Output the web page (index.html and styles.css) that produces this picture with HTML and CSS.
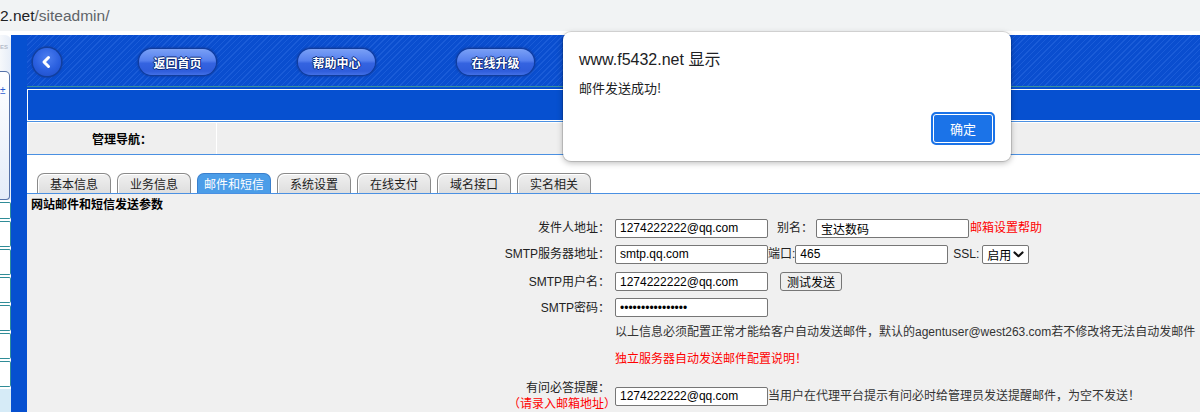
FILE: index.html
```html
<!DOCTYPE html>
<html lang="zh-CN">
<head>
<meta charset="utf-8">
<title>siteadmin</title>
<link rel="stylesheet" href="styles.css">
</head>
<body>
<div class="urlbar"><span class="host">2.net</span><span class="path">/siteadmin/</span></div>
<div class="page">
  <aside class="side">
    <div class="side-top">
      <div class="side-head">ES</div>
      <div class="side-panel"><span class="side-link">±</span></div>
    </div>
    <div class="side-list">
      <div class="side-item short"></div>
      <div class="side-item"></div>
      <div class="side-item"></div>
      <div class="side-item"></div>
      <div class="side-item"></div>
      <div class="side-item"></div>
      <div class="side-item"></div>
    </div>
    <div class="side-foot"></div>
  </aside>
  <div class="strip"></div>
  <main class="main">
    <div class="masthead">
      <header class="top">
        <a class="back" href="#"><svg width="28" height="28" viewBox="0 0 28 28"><polyline points="15.5,9.5 11,14 15.5,18.5" fill="none" stroke="#fff" stroke-width="3" stroke-linecap="round" stroke-linejoin="round"/></svg></a>
        <a class="pill first" href="#">返回首页</a>
        <a class="pill" href="#">帮助中心</a>
        <a class="pill" href="#">在线升级</a>
      </header>
      <div class="band"></div>
    </div>
    <div class="navrow">
      <div class="navlabel">管理导航：</div>
      <div class="navfill"></div>
    </div>
    <nav class="tabs">
      <span class="tab">基本信息</span>
      <span class="tab">业务信息</span>
      <span class="tab active">邮件和短信</span>
      <span class="tab">系统设置</span>
      <span class="tab">在线支付</span>
      <span class="tab">域名接口</span>
      <span class="tab">实名相关</span>
    </nav>
    <section class="panel">
      <div class="panel-title">网站邮件和短信发送参数</div>
      <div class="row r-sender">
        <div class="label">发件人地址：</div>
        <div class="field">
          <input class="input" type="text" value="1274222222@qq.com">
          <span class="alias-label">别名：</span>
          <input class="input" type="text" value="宝达数码">
          <a class="warn help" href="#">邮箱设置帮助</a>
        </div>
      </div>
      <div class="row r-server">
        <div class="label">SMTP服务器地址：</div>
        <div class="field">
          <input class="input" type="text" value="smtp.qq.com">
          <span>端口:</span>
          <input class="input" type="text" value="465">
          <span class="ssl-label">SSL:</span>
          <span class="select-wrap">
            <select class="select"><option>启用</option></select>
            <svg class="chev" width="11" height="7" viewBox="0 0 11 7"><polyline points="1.5,1.5 5.5,5.2 9.5,1.5" fill="none" stroke="#111" stroke-width="2.2" stroke-linecap="round" stroke-linejoin="round"/></svg>
          </span>
        </div>
      </div>
      <div class="row r-user">
        <div class="label">SMTP用户名：</div>
        <div class="field">
          <input class="input" type="text" value="1274222222@qq.com">
          <button class="btn" type="button">测试发送</button>
        </div>
      </div>
      <div class="row r-pass">
        <div class="label">SMTP密码：</div>
        <div class="field">
          <input class="input" type="password" value="abcdefghijklmnop">
        </div>
      </div>
      <div class="row r-note">
        <div class="label"></div>
        <div class="field note">以上信息必须配置正常才能给客户自动发送邮件，默认的agentuser@west263.com若不修改将无法自动发邮件</div>
      </div>
      <div class="row r-link">
        <div class="label"></div>
        <div class="field"><a class="warn" href="#">独立服务器自动发送邮件配置说明！</a></div>
      </div>
      <div class="row r-remind">
        <div class="label two-line">有问必答提醒：<span class="warn block hint">（请录入邮箱地址）</span></div>
        <div class="field">
          <input class="input" type="text" value="1274222222@qq.com">
          <span class="note">当用户在代理平台提示有问必时给管理员发送提醒邮件，为空不发送！</span>
        </div>
      </div>
    </section>
  </main>
</div>
<div class="dialog">
  <div class="dialog-title">www.f5432.net 显示</div>
  <div class="dialog-msg">邮件发送成功!</div>
  <div class="dialog-actions"><button class="ok" type="button">确定</button></div>
</div>
</body>
</html>
```
FILE: styles.css
```css
* { box-sizing: border-box; }
html, body { margin: 0; padding: 0; }
body {
  width: 1200px;
  height: 412px;
  overflow: hidden;
  position: relative;
  background: #fff;
  font-family: "Liberation Sans", "Noto Sans CJK SC", sans-serif;
  font-size: 12px;
  color: #222;
}
a { text-decoration: none; }

/* browser url bar */
.urlbar {
  height: 31px;
  line-height: 31px;
  background: #f1f3f4;
  font-size: 15.5px;
  white-space: nowrap;
  margin-bottom: 4px;
}
.host { color: #202124; }
.path { color: #5f6368; }

.page { display: flex; height: 377px; }

/* left sidebar */
.side { width: 11px; flex-shrink: 0; display: flex; flex-direction: column; background: #fff; overflow: hidden; }
.side-top { height: 165px; display: flex; flex-direction: column; background: linear-gradient(90deg, #f6f8fb, #e6edf8); border-radius: 0 6px 0 0; }
.side-head {
  height: 36px;
  padding-top: 8px;
  font-size: 6px;
  line-height: 8px;
  color: #b4bcc9;
  text-align: left;
  font-weight: bold;
  white-space: nowrap;
}
.side-panel {
  flex: 1;
  border: 1px solid #5672a8;
  border-left: none;
  border-radius: 0 5px 4px 0;
  background: linear-gradient(180deg, #fff, #e4ecf9);
  margin-right: 1px;
  padding-top: 14px;
}
.side-link { color: #2a5bd0; font-size: 10px; display: block; line-height: 10px; }
.side-list { display: flex; flex-direction: column; gap: 2px; margin-top: 2px; }
.side-item { height: 26px; background: #fff; border: 1px solid #2f8c97; border-left: none; border-radius: 0 2px 2px 0; }
.side-item.short { height: 17px; }
.side-foot { flex: 1; margin-top: 2px; background: #d6ebf7; }

.strip { width: 16px; flex-shrink: 0; background: #0650d0; }

.main { flex: 1; min-width: 0; display: flex; flex-direction: column; }

/* top blue header */
.masthead { background: #0650d0; }
.top {
  height: 52px;
  border-bottom: 1px solid #3a8f9c;
  background: repeating-linear-gradient(135deg, #0a4ecf 0 3px, #1a5cd8 3px 4px);
  display: flex;
  align-items: center;
  padding: 3px 0 0 6px;
}
.back {
  width: 28px;
  height: 28px;
  border-radius: 50%;
  flex-shrink: 0;
  display: block;
  background: radial-gradient(circle at 50% 35%, #4d7ff0 0%, #2a5fdf 55%, #1d4cc4 100%);
  box-shadow: 0 0 0 1.5px #123f9e, 0 0 2px 2px rgba(20, 60, 160, 0.5);
}
.back svg { display: block; }
.pill {
  width: 77px;
  height: 26px;
  border-radius: 13px;
  flex-shrink: 0;
  margin-left: 82px;
  display: flex;
  align-items: center;
  justify-content: center;
  color: #fff;
  font-weight: bold;
  font-size: 12px;
  font-family: "Noto Sans CJK SC", sans-serif;
  background: linear-gradient(180deg, #7aa0f6 0%, #5580ee 45%, #3463e0 55%, #2f5ddb 85%, #4370e6 100%);
  box-shadow: 0 0 0 1px #113d9e, 0 0 2px 2px rgba(16, 55, 150, 0.55);
  text-shadow: 1px 0 0 #08287a, -1px 0 0 #08287a, 0 1px 0 #08287a, 0 -1px 0 #08287a;
}
.pill.first { margin-left: 78px; }

.band {
  margin-top: 2px;
  height: 32px;
  border: 1px solid #fff;
  border-right: none;
  background: #0650d0;
}

/* nav row */
.navrow {
  display: flex;
  gap: 1px;
  height: 34px;
  border-top: 1px solid #4a90e2;
  border-bottom: 1px solid #4a90e2;
  padding: 1px 0 0 1px;
  background: #fff;
}
.navlabel {
  width: 188px;
  background: #efefef;
  text-align: center;
  line-height: 31px;
  font-weight: bold;
  color: #000;
  font-family: "Noto Sans CJK SC", sans-serif;
}
.navfill { flex: 1; background: #efefef; }

/* tabs */
.tabs {
  height: 38px;
  display: flex;
  align-items: flex-end;
  gap: 6px;
  padding-left: 10px;
}
.tab {
  width: 74px;
  height: 20px;
  border: 1px solid #8a8a8a;
  border-bottom: none;
  border-radius: 7px 7px 0 0;
  background: linear-gradient(180deg, #f0f0f0, #dedede);
  box-shadow: inset 1px 1px 0 #fff;
  text-align: center;
  line-height: 20px;
  color: #222;
  font-family: "Noto Sans CJK SC", sans-serif;
}
.tab.active {
  background: #4b9de8;
  border-color: #3a7fcc;
  box-shadow: none;
  color: #fff;
}

/* main form panel */
.panel {
  flex: 1;
  border-top: 1px solid #4a90e2;
  background: #f0f0f0;
  overflow: hidden;
}
.panel-title {
  height: 22px;
  line-height: 22px;
  padding-left: 4px;
  font-weight: bold;
  color: #000;
}
.row { display: flex; align-items: center; }
.r-sender { height: 24px; }
.r-server { height: 28px; }
.r-user { height: 27px; }
.r-pass { height: 25px; }
.r-note { height: 24px; }
.r-link { height: 30px; }
.r-remind { height: 44px; }

.label {
  width: 583px;
  flex-shrink: 0;
  text-align: right;
  color: #222;
  line-height: 16px;
}
.label.two-line { line-height: 16px; }
.block { display: block; }
.hint { margin-right: -6px; }
.field {
  margin-left: 5px;
  display: flex;
  align-items: center;
  white-space: nowrap;
  line-height: 16px;
}
.note { color: #333; }
.warn { color: #ff0000; }
.help { margin-left: 1px; }

.input {
  width: 153px;
  height: 19px;
  border: 1px solid #767676;
  border-radius: 2px;
  padding: 0 4px;
  margin: 0;
  background: #fff;
  color: #000;
  font: 12px "Liberation Sans", "Noto Sans CJK SC", sans-serif;
}
.alias-label { margin: 0 3px 0 9px; }
.ssl-label { margin: 0 3px 0 5px; }

.select-wrap { position: relative; display: inline-flex; }
.select {
  -webkit-appearance: none;
  appearance: none;
  width: 47px;
  height: 19px;
  border: 1px solid #767676;
  border-radius: 2px;
  background: #fff;
  padding: 0 0 0 4px;
  margin: 0;
  color: #000;
  font: 12px "Noto Sans CJK SC", sans-serif;
}
.chev { position: absolute; right: 5px; top: 6px; pointer-events: none; }

.btn {
  height: 19px;
  margin: 0 0 0 12px;
  padding: 0 6px;
  border: 1px solid #767676;
  border-radius: 3px;
  background: #efefef;
  color: #000;
  font: 12px "Noto Sans CJK SC", sans-serif;
  line-height: 16px;
}

/* alert dialog */
.dialog {
  position: absolute;
  left: 563px;
  top: 32px;
  width: 448px;
  height: 129px;
  background: #fff;
  border-radius: 8px;
  box-shadow: 0 0 0 1px rgba(0, 0, 0, 0.13), 0 2px 6px rgba(0, 0, 0, 0.28);
  padding: 16px 16px 16px 16px;
  display: flex;
  flex-direction: column;
  color: #202124;
}
.dialog-title { font-size: 16px; line-height: 24px; }
.dialog-msg { font-size: 13px; line-height: 20px; margin-top: 6px; font-family: "Noto Sans CJK SC", sans-serif; }
.dialog-actions { margin-top: auto; display: flex; justify-content: flex-end; }
.ok {
  width: 64px;
  height: 33px;
  border: 2px solid #1b73e8;
  border-radius: 5px;
  background: #1b73e8;
  box-shadow: inset 0 0 0 1px #fff;
  color: #fff;
  font: 13px "Noto Sans CJK SC", sans-serif;
  padding: 0;
}
```
